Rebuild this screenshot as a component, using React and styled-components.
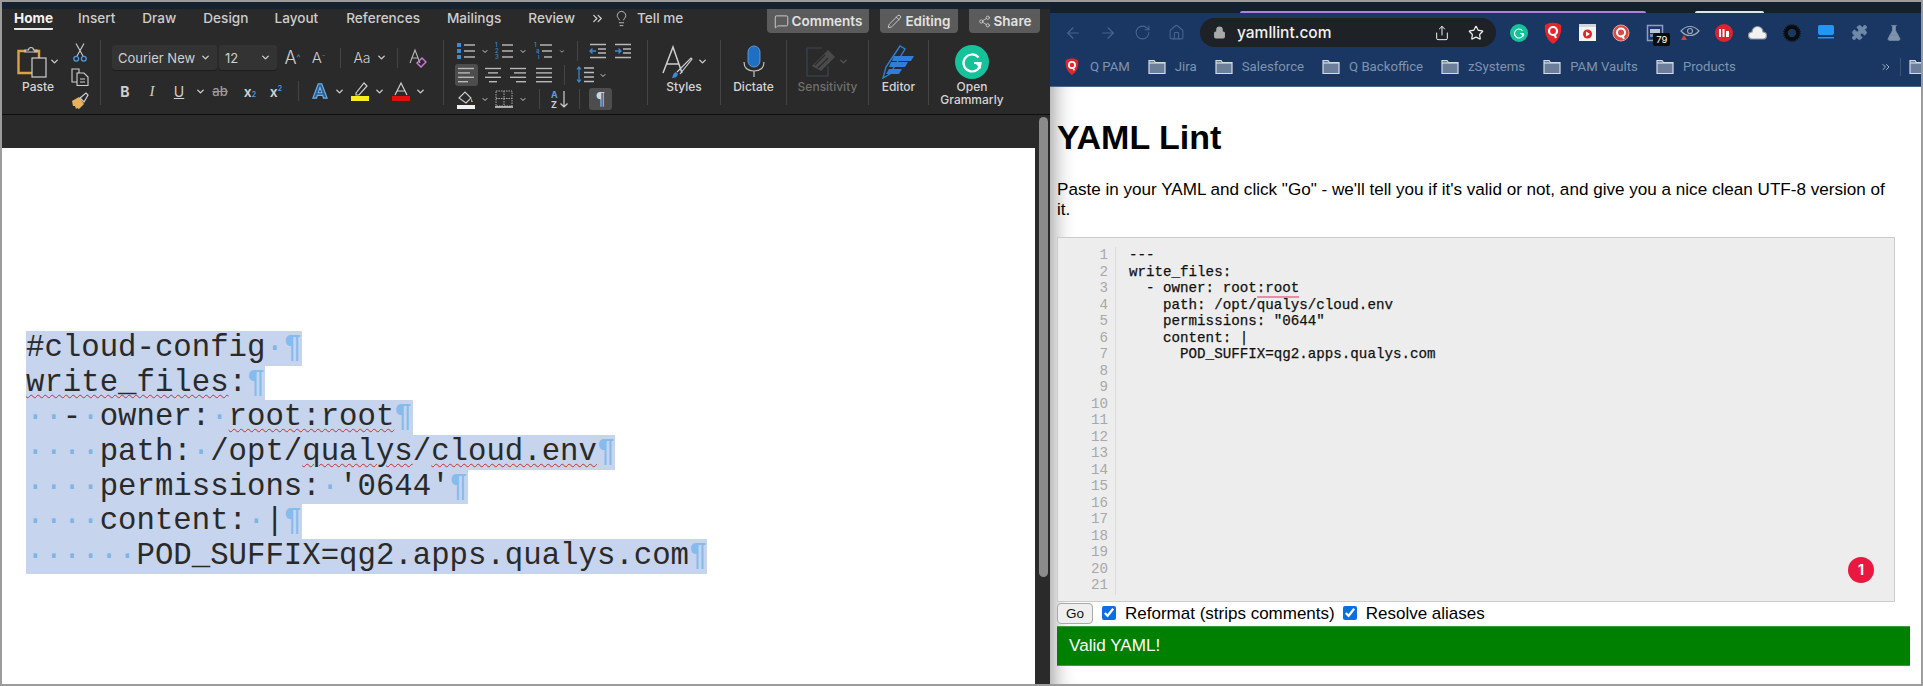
import React from 'react';
import styled, { createGlobalStyle } from 'styled-components';
import {
  ArrowLeft, ArrowRight, RotateCw, Home as HomeIcon, Lock, Share as ShareUp, Star, Puzzle, FlaskConical,
  ChevronDown, ChevronsRight, Lightbulb, MessageSquare, Pencil, Share2, ChevronsRight as More,
} from 'lucide-react';

const GlobalStyle = createGlobalStyle`
  html, body { margin: 0; padding: 0; background: #9c9c9c; overflow: hidden; }
  * { box-sizing: border-box; }
`;

const Frame = styled.div`
  display: flex;
  width: 1923px;
  height: 686px;
  padding: 2px;
  background: #9c9c9c;
  font-family: Inter, "Liberation Sans", sans-serif;
`;

/* ---------- word ---------- */
const Word = styled.div`
  width: 1048px;
  flex: none;
  display: flex;
  flex-direction: column;
  background: #2a2a2a;
`;
const TopStrip = styled.div`
  height: 7px;
  background: ${p => p.$bg};
  flex: none;
`;
const TabRow = styled.div`
  height: 27px;
  display: flex;
  align-items: flex-start;
  padding-left: 12px;
  background: #2a2a2a;
  color: #cfcfcf;
  flex: none;
  position: relative;
`;
const Tab = styled.div`
  font-size: 13.6px;
  line-height: 18px;
  margin-right: ${p => p.$gap}px;
  font-weight: ${p => (p.$active ? 700 : 500)};
  color: ${p => (p.$active ? '#f2f2f2' : '#cdcdcd')};
  padding-bottom: 1px;
  border-bottom: ${p => (p.$active ? '2px solid #e8e8e8' : '2px solid transparent')};
  border-radius: 1px;
`;
const TabTools = styled.div`
  display: flex;
  align-items: center;
  color: #cfcfcf;
  height: 18px;
  gap: 8px;
  margin-right: 7px;
`;
const ShareButtons = styled.div`
  margin-left: auto;
  display: flex;
  gap: 11px;
  margin-right: 10px;
`;
const PillButton = styled.div`
  width: ${p => p.$w}px;
  height: 24px;
  display: flex;
  align-items: center;
  justify-content: center;
  gap: 3px;
  background: #5b5b5b;
  color: #e2e2e2;
  border-radius: 0 0 4px 4px;
  font-size: 13.5px;
  font-weight: 600;
`;
const Ribbon = styled.div`
  height: 79px;
  flex: none;
  display: flex;
  background: #2a2a2a;
  border-bottom: 1px solid #0d0d0d;
`;
const Group = styled.div`
  width: ${p => p.$w}px;
  flex: none;
  display: flex;
  flex-direction: ${p => (p.$col ? 'column' : 'row')};
  padding-left: ${p => p.$pl || 0}px;
  padding-top: ${p => p.$pt || 0}px;
`;
const Sep = styled.div`
  width: 1px;
  margin: 4px 0 9px;
  background: #444;
  flex: none;
`;
const Cell = styled.div`
  width: ${p => p.$w}px;
  height: 24px;
  flex: none;
  display: flex;
  align-items: center;
  justify-content: center;
  color: ${p => p.$c || '#cfcfcf'};
  font-size: ${p => p.$fs || 14}px;
  font-weight: ${p => p.$fw || 500};
  font-style: ${p => (p.$italic ? 'italic' : 'normal')};
`;
const MiniSep = styled.span`
  width: 1px;
  height: 20px;
  background: #454545;
`;
const Row = styled.div`
  display: flex;
  align-items: center;
  height: ${p => p.$h || 24}px;
  margin-top: ${p => p.$mt || 0}px;
  margin-left: ${p => p.$ml || 0}px;
`;
const Picker = styled.div`
  width: ${p => p.$w}px;
  height: 25px;
  margin-right: 2px;
  display: flex;
  align-items: center;
  justify-content: space-between;
  padding: 0 6px;
  background: #333;
  border-radius: 3px;
  box-shadow: 0 1px 0 #1d1d1d;
  color: #d0d0d0;
  font-size: 13px;
`;
const Selected = styled.div`
  width: 23px;
  height: 22px;
  display: flex;
  align-items: center;
  justify-content: center;
  border-radius: 3px;
  background: #4d4d4d;
  font-family: "Liberation Serif", serif;
  font-size: 18px;
  color: #d4d4d4;
`;
const PasteCol = styled.div`
  width: 56px;
  margin-left: 8px;
  display: flex;
  flex-direction: column;
  align-items: center;
`;
const ClipStack = styled.div`
  width: 28px;
  padding-top: 5px;
  display: flex;
  flex-direction: column;
  align-items: center;
`;
const LargeCol = styled.div`
  display: flex;
  flex-direction: column;
  align-items: center;
  width: 100%;
  padding-top: 7px;
`;
const LargeIcon = styled.div`
  height: 37px;
  display: flex;
  align-items: center;
  justify-content: center;
  gap: 2px;
`;
const RibbonLabel = styled.div`
  margin-top: ${p => p.$mt || 0}px;
  font-size: 12px;
  line-height: 13px;
  text-align: center;
  font-weight: 500;
  color: ${p => (p.$dim ? '#6f6f6f' : '#d4d4d4')};
`;
const GrowMark = styled.sup`
  font-size: ${p => p.$fs}px;
  color: #5aa0e0;
`;
const ScriptMark = styled.span`
  font-size: 7px;
  color: #4f9ce0;
  align-self: ${p => p.$align};
  margin-top: ${p => (p.$align === 'flex-start' ? 5 : 0)}px;
  margin-bottom: ${p => (p.$align === 'flex-end' ? 4 : 0)}px;
`;
const SerifItalic = styled.span`
  font-family: "Liberation Serif", serif;
  font-style: italic;
  font-size: 15px;
`;
const DarkBand = styled.div`
  height: 33px;
  flex: none;
  background: #2a2a2a;
`;
const DocArea = styled.div`
  flex: 1;
  display: flex;
  min-height: 0;
`;
const Page = styled.div`
  flex: 1;
  background: #fff;
  padding: 183px 0 0 24px;
`;
const DocLine = styled.div`
  width: fit-content;
  height: 34.7px;
  line-height: 34.7px;
  background: #c6d4ed;
  font-family: "Liberation Mono", monospace;
  font-size: 30.7px;
  color: #2a2a2a;
  white-space: pre;
`;
const Dot = styled.span`
  color: #7fb4e6;
`;
const Pilcrow = styled.span`
  color: #86bbee;
`;
const Squiggle = styled.span`
  text-decoration: underline wavy #c4302b 1px;
  text-underline-offset: 3px;
`;
const ScrollTrack = styled.div`
  width: 15px;
  flex: none;
  padding: 0 2px 109px 4px;
  margin-top: -33px;
  background: #2a2a2a;
`;
const ScrollThumb = styled.div`
  height: 100%;
  margin-top: 2px;
  border-radius: 5px;
  background: #8b8b8b;
`;

/* ---------- browser ---------- */
const Browser = styled.div`
  flex: 1;
  min-width: 0;
  display: flex;
  flex-direction: column;
  background: #fff;
`;
const TabStrip = styled.div`
  height: 11px;
  flex: none;
  display: flex;
  align-items: flex-end;
  background: #14202e;
  padding-left: 190px;
`;
const TabLine = styled.div`
  height: 2px;
  width: ${p => p.$w}px;
  margin-right: ${p => p.$mr || 0}px;
  background: ${p => p.$c};
  border-radius: 2px 2px 0 0;
`;
const Toolbar = styled.div`
  height: 39px;
  flex: none;
  display: flex;
  align-items: center;
  padding-left: 6px;
  background: #1a3763;
  overflow: hidden;
`;
const NavButton = styled.div`
  width: 34.5px;
  flex: none;
  display: flex;
  justify-content: center;
  color: #47658f;
`;
const Omnibox = styled.div`
  width: 296px;
  height: 29px;
  flex: none;
  margin: 0 6px;
  display: flex;
  align-items: center;
  padding: 0 12px 0 13px;
  border-radius: 15px;
  background: #1e2126;
  color: #f1f1f1;
`;
const Url = styled.div`
  margin-left: 11px;
  font-size: 15.5px;
  font-weight: 500;
  flex: 1;
`;
const OmniAction = styled.div`
  display: flex;
  margin-left: ${p => p.$ml || 0}px;
`;
const ExtSlot = styled.div`
  width: 34.1px;
  flex: none;
  display: flex;
  justify-content: center;
  position: relative;
  color: #6f89a8;
`;
const CountBadge = styled.div`
  position: absolute;
  left: 15px;
  top: 9px;
  width: 17px;
  height: 13px;
  background: #0b0b0b;
  color: #fff;
  font-size: 9.5px;
  line-height: 13px;
  text-align: center;
  border-radius: 2px;
`;
const Bookmarks = styled.div`
  height: 35px;
  flex: none;
  display: flex;
  align-items: center;
  padding: 0 0 5px 15px;
  background: #1a3763;
  border-bottom: 1px solid #4a6586;
  color: #7e94b0;
  font-family: Roboto, sans-serif;
  font-size: 13.2px;
  overflow: hidden;
`;
const Bookmark = styled.div`
  display: flex;
  align-items: center;
  gap: ${p => p.$gap || 9}px;
  margin-right: 18px;
  flex: none;
`;
const BookmarkEnd = styled.div`
  margin-left: auto;
  display: flex;
  align-items: center;
  gap: 8px;
  margin-right: -6px;
  color: #9fb1c7;
`;
const BookmarkSep = styled.span`
  width: 1px;
  height: 18px;
  background: #3a5578;
`;
const WebPage = styled.div`
  flex: 1;
  padding: 30px 0 0 7px;
  background: #fff;
  box-shadow: inset 22px 0 22px -20px rgba(0, 0, 0, 0.45);
  font-family: "Liberation Sans", Arial, sans-serif;
  color: #000;
  font-size: 17.1px;
`;
const Title = styled.h1`
  margin: 0;
  font-size: 34px;
  line-height: 40px;
  font-weight: 700;
`;
const Intro = styled.p`
  margin: 23px 0 17px;
  width: 838px;
  line-height: 20px;
`;
const CodeBox = styled.div`
  position: relative;
  width: 838px;
  height: 365px;
  display: flex;
  padding: 9px 0 6px;
  background: #ededed;
  border: 1px solid #cbcbcb;
  font-family: "Liberation Mono", monospace;
  font-size: 14.2px;
  line-height: 16.5px;
`;
const Gutter = styled.div`
  width: 58px;
  flex: none;
  padding-right: 7px;
  text-align: right;
  color: #a8a8a8;
  border-right: 1px solid #dcdcdc;
`;
const Code = styled.pre`
  margin: 0 0 0 13px;
  font: inherit;
  color: #111;
  -webkit-text-stroke: 0.25px #111;
`;
const SpellMark = styled.span`
  border-bottom: 2px solid #ee8ba8;
`;
const ErrorBadge = styled.div`
  position: absolute;
  right: 20px;
  bottom: 18px;
  width: 26px;
  height: 26px;
  border-radius: 50%;
  background: #e8183f;
  color: #fff;
  font-family: Inter, sans-serif;
  font-size: 14px;
  font-weight: 700;
  line-height: 26px;
  text-align: center;
`;
const FormRow = styled.div`
  display: flex;
  align-items: center;
  height: 21px;
  margin-top: 1px;
`;
const GoButton = styled.button`
  width: 36px;
  height: 21px;
  padding: 0;
  margin-right: 9px;
  background: #efefef;
  border: 1px solid #a9a9a9;
  border-radius: 4px;
  font-family: "Liberation Sans", Arial, sans-serif;
  font-size: 13.5px;
  color: #111;
`;
const Check = styled.input`
  width: 14px;
  height: 14px;
  margin: 0 9px 2px 0;
  accent-color: #0b6fe3;
`;
const CheckLabel = styled.label`
  margin-right: 8px;
  font-size: 17px;
`;
const ValidBar = styled.div`
  width: 853px;
  height: 40px;
  margin-top: 2px;
  padding-left: 12px;
  display: flex;
  align-items: center;
  background: #008000;
  border-top: 1px solid #3d9c3d;
  border-bottom: 1px solid #3d9c3d;
  color: #fff;
`;

/* ---------- drawings ---------- */
const Chev = ({ c = '#cfcfcf' }) => <ChevronDown size={11} strokeWidth={3} color={c} />;

const Bars = ({ kind }) => {
  const rows = {
    left: [[2, 18], [2, 14], [2, 18], [2, 12]],
    center: [[2, 18], [5, 15], [2, 18], [6, 14]],
    right: [[2, 18], [6, 18], [2, 18], [8, 18]],
    just: [[2, 18], [2, 18], [2, 18], [2, 18]],
  }[kind];
  return (
    <svg width="20" height="18" viewBox="0 0 20 18" stroke="#b8b8b8" strokeWidth="1.4">
      {rows.map(([a, b], i) => <line key={i} x1={a} x2={b} y1={2.5 + i * 4.4} y2={2.5 + i * 4.4} />)}
    </svg>
  );
};

const ListIcon = ({ marks }) => (
  <svg width="20" height="18" viewBox="0 0 20 18">
    {[3, 9, 15].map((y, i) => (
      <g key={y}>
        {marks === 'bullet' && <rect x="1" y={y - 2} width="4" height="4" fill="#3d8bd4" />}
        {marks === 'number' && <text x="1" y={y + 2} fontSize="6" fontFamily="Inter" fill="#3d8bd4">{i + 1}</text>}
        {marks === 'multi' && <text x={1 + i * 2} y={y + 2} fontSize="6" fontFamily="Inter" fill="#3d8bd4">{['1', 'a', 'i'][i]}</text>}
        <line x1={marks === 'multi' ? 7 + i * 2 : 8} x2="19" y1={y} y2={y} stroke="#bdbdbd" strokeWidth="1.4" />
      </g>
    ))}
  </svg>
);

const IndentIcon = ({ dir }) => (
  <svg width="18" height="16" viewBox="0 0 18 16" fill="none" stroke="#b9b9b9" strokeWidth="1.3">
    <path d="M1 1.5h16M9 6h8M9 10h8M1 14.5h16" />
    <path d={dir === 'out' ? 'M7 8H1M3.5 5.5 1 8l2.5 2.5' : 'M1 8h6M4.5 5.5 7 8l-2.5 2.5'} stroke="#3d8bd4" />
  </svg>
);

const PasteIcon = () => (
  <svg width="32" height="33" viewBox="0 0 32 33" fill="none">
    <path d="M9 6H1.5v22H15" stroke="#e0a040" strokeWidth="2.4" />
    <path d="M17 6h5v7" stroke="#e0a040" strokeWidth="2.4" />
    <path d="M8 7V5h3.5a2.5 2.5 0 0 1 5 0H20v2z" stroke="#c9c9c9" strokeWidth="1.2" />
    <rect x="15" y="13" width="14" height="19" stroke="#d0d0d0" strokeWidth="1.2" />
  </svg>
);

const CutIcon = () => (
  <svg width="14" height="20" viewBox="0 0 14 20" fill="none">
    <path d="M3 0.5 10 13M11 0.5 4 13" stroke="#cfcfcf" strokeWidth="1.1" />
    <circle cx="3.2" cy="15.800" r="2.400" stroke="#4f9ce0" strokeWidth="1.300" />
    <circle cx="10.800" cy="15.800" r="2.400" stroke="#4f9ce0" strokeWidth="1.300" />
  </svg>
);

const CopyIcon = () => (
  <svg width="18" height="18" viewBox="0 0 18 18" fill="none" stroke="#cfcfcf" strokeWidth="1.1">
    <path d="M6 14H1V1h7l0 4" />
    <path d="M6 5h7l4 4v8.500H6zM9 11h5M9 14h5" />
  </svg>
);

const BrushIcon = () => (
  <svg width="18" height="18" viewBox="0 0 18 18">
    <path d="M1 9 8 5l5 7-5 5-2-1-1 1-1-3-2 0z" fill="#e8b25c" />
    <path d="M9 6l6-5 2 2-4 7z" fill="none" stroke="#d0d0d0" strokeWidth="1.2" />
  </svg>
);

const ColorA = ({ bar }) => (
  <svg width="18" height="20" viewBox="0 0 18 20" fill="none">
    <path d="M3 14 9 2l6 12M5 10h8" stroke="#cfcfcf" strokeWidth="1.2" />
    <rect x="0" y="15" width="18" height="5" fill={bar} />
  </svg>
);

const HighlightIcon = () => (
  <svg width="18" height="20" viewBox="0 0 18 20" fill="none">
    <path d="M5 12 13 2l3 3-8 9-3 0z" stroke="#cfcfcf" strokeWidth="1.2" />
    <rect x="0" y="15" width="18" height="5" fill="#f5ee1d" />
  </svg>
);

const EffectA = () => (
  <svg width="18" height="20" viewBox="0 0 18 20">
    <path d="M1 18 7 2h4l6 16h-4l-1-3H6l-1 3zM7 12h4L9 6z" fill="#2a5f92" stroke="#6fb3ea" strokeWidth="1.3" />
  </svg>
);

const ClearFormat = () => (
  <svg width="18" height="20" viewBox="0 0 18 20" fill="none">
    <path d="M1 15 6 2l5 13M3 10h6" stroke="#b8b8b8" strokeWidth="1.1" />
    <path d="M8 15l5-5 4 4-5 5z" stroke="#c77ad0" strokeWidth="1.5" />
  </svg>
);

const FillIcon = () => (
  <svg width="18" height="20" viewBox="0 0 18 20" fill="none">
    <path d="M2 9 8 3l6 6-5 5z" stroke="#cfcfcf" strokeWidth="1.1" />
    <path d="M14 9l2 4-2 0z" fill="#e0a040" />
    <rect y="16" width="18" height="4" fill="#f0f0f0" />
  </svg>
);

const BorderIcon = () => (
  <svg width="18" height="18" viewBox="0 0 18 18" fill="none" stroke="#a8a8a8" strokeWidth="1" strokeDasharray="1.500 1">
    <rect x="1" y="1" width="16" height="15" />
    <path d="M9 1v15M1 8.500h16" />
    <path d="M0 17h18" stroke="#e0e0e0" strokeDasharray="none" strokeWidth="1.4" />
  </svg>
);

const SpacingIcon = () => (
  <svg width="18" height="18" viewBox="0 0 18 18" fill="none">
    <path d="M3 1v15M1 3.500 3 1l2 2.500M1 13.500 3 16l2-2.500" stroke="#3d8bd4" strokeWidth="1.2" />
    <path d="M8 2h10M8 6.500h10M8 11h10M8 15.500h10" stroke="#bdbdbd" strokeWidth="1.3" />
  </svg>
);

const SortIcon = () => (
  <svg width="18" height="20" viewBox="0 0 18 20" fill="none">
    <text x="0" y="9" fontSize="9" fontWeight="700" fontFamily="Inter" fill="#5aa0e0">A</text>
    <text x="0" y="19" fontSize="9" fontWeight="700" fontFamily="Inter" fill="#cfcfcf">Z</text>
    <path d="M13 2v16M9.500 14.500 13 18l3.500-3.500" stroke="#cfcfcf" strokeWidth="1.2" />
  </svg>
);

const StylesIcon = () => (
  <svg width="34" height="34" viewBox="0 0 34 34" fill="none">
    <path d="M2 28 12 2l9 26M6 19h12" stroke="#cfcfcf" strokeWidth="1.5" />
    <path d="M16 27 30 13l1 1-12 15" stroke="#cfcfcf" strokeWidth="1.2" />
    <path d="M11 33c3 0 5-1 6-4l-2-2c-3 1-3 4-4 6z" fill="#3d8bd4" />
  </svg>
);

const MicIcon = () => (
  <svg width="22" height="33" viewBox="0 0 22 33" fill="none">
    <rect x="5" y="1" width="12" height="21" rx="6" fill="#1f6fc4" stroke="#6aa7e0" strokeWidth=".8" />
    <path d="M1 17c0 6 4 9 10 9s10-3 10-9M11 26v6" stroke="#c4c4c4" strokeWidth="1.2" />
  </svg>
);

const SensitivityIcon = () => (
  <svg width="30" height="31" viewBox="0 0 30 31" fill="none">
    <path d="M1 2h15M1 2v28h21V20" stroke="#3a4652" strokeWidth="1.2" />
    <path d="M6 20 22 4l7 7-14 14z" fill="#4a4a4a" />
    <path d="M9 19l10-10M12 22l10-10" stroke="#2a2a2a" strokeWidth="1.2" />
  </svg>
);

const EditorIcon = () => (
  <svg width="33" height="34" viewBox="0 0 33 34">
    <path d="M1 33 4 22 18 1l5 3L8 29z" fill="none" stroke="#2f7fd8" strokeWidth="1.4" />
    <path d="M12 11h20l-3 5H10zM9 17h17l-3 5H7zM7 24h13l-3 5H4z" fill="#2f7fd8" />
  </svg>
);

const GrammarlyMark = ({ size }) => (
  <svg width={size} height={size} viewBox="0 0 34 34">
    <circle cx="17" cy="17" r="17" fill="#15c39a" />
    <path d="M23.500 12.500A8.500 8.500 0 1 0 25.500 18H19" fill="none" stroke="#fff" strokeWidth="2.2" />
    <path d="M26 24v-6h-6z" fill="#fff" />
  </svg>
);

const QShield = ({ size = 22 }) => (
  <svg width={size * 0.82} height={size} viewBox="0 0 18 22">
    <path d="M1 3c5-3 11-3 16 0 1 8-2 15-8 19C3 18 0 11 1 3z" fill="#e2272c" />
    <circle cx="9" cy="9" r="4" fill="none" stroke="#fff" strokeWidth="2.200" />
    <path d="M10 12l2 4" stroke="#fff" strokeWidth="2" />
  </svg>
);

const FolderIcon = () => (
  <svg width="18" height="15" viewBox="0 0 18 15">
    <path d="M1 1.500h5l1.500 2H17v11H1z" fill="#6b7f9b" stroke="#d4dbe4" strokeWidth="1.200" />
    <path d="M1 4h16" stroke="#d4dbe4" strokeWidth="1.200" />
  </svg>
);

const PlayTile = () => (
  <svg width="17" height="17" viewBox="0 0 17 17">
    <rect width="17" height="17" fill="#f4f4f4" />
    <rect width="17" height="3" fill="#cfd6df" />
    <circle cx="8.500" cy="10" r="4.500" fill="#d92b2b" />
    <path d="M7 7.500v5l4-2.500z" fill="#fff" />
  </svg>
);

const QRing = () => (
  <svg width="18" height="18" viewBox="0 0 18 18" fill="none">
    <circle cx="9" cy="9" r="8" fill="#d94a45" stroke="#e8a09c" />
    <circle cx="9" cy="8.500" r="4" stroke="#fff" strokeWidth="2" />
    <path d="M10 11l2 4" stroke="#fff" strokeWidth="2" />
  </svg>
);

const FrameExt = () => (
  <svg width="18" height="18" viewBox="0 0 18 18" fill="none">
    <rect x="1.500" y="1.500" width="15" height="15" stroke="#8ea0b6" strokeWidth="1.500" />
    <rect x="4" y="5" width="10" height="4" fill="#b7c6d8" />
    <rect x="4" y="10" width="10" height="3" fill="#6f89a8" />
  </svg>
);

const EyeExt = () => (
  <svg width="20" height="16" viewBox="0 0 20 16" fill="none">
    <path d="M1 6c5-6 13-6 18 0-5 6-13 6-18 0z" stroke="#9aa6b5" strokeWidth="1.200" />
    <circle cx="10" cy="6" r="2.500" stroke="#9aa6b5" strokeWidth="1.200" />
    <path d="M1 15l3-5 3 5z" fill="#d0433e" />
  </svg>
);

const BarsExt = () => (
  <svg width="18" height="18" viewBox="0 0 18 18">
    <circle cx="9" cy="9" r="9" fill="#d9262e" />
    <path d="M4 5h2v8H4zM7.500 5h2v8h-2zM11 7h3v6h-3z" fill="#fff" />
  </svg>
);

const CloudExt = () => (
  <svg width="19" height="16" viewBox="0 0 19 16">
    <path d="M4 14a3.500 3.500 0 0 1 0-7 5.500 5.500 0 0 1 11 0 3.500 3.500 0 0 1 0 7z" fill="#f2f2f2" stroke="#8a94a0" strokeWidth="1.200" />
  </svg>
);

const SunExt = () => (
  <svg width="18" height="18" viewBox="0 0 18 18" fill="none">
    <circle cx="9" cy="9" r="6" stroke="#0b0b0b" strokeWidth="3.500" />
    <circle cx="9" cy="9" r="8" stroke="#0b0b0b" strokeWidth="1.600" strokeDasharray="1 1" />
  </svg>
);

const BlueExt = () => (
  <svg width="18" height="15" viewBox="0 0 18 15">
    <rect x="1" y="0" width="16" height="10" rx="2" fill="#2196f3" />
    <rect x="1" y="12" width="16" height="1.500" fill="#2196f3" />
  </svg>
);

const tabs = [
  ['Insert', 27], ['Draw', 27], ['Design', 26], ['Layout', 28], ['References', 27], ['Mailings', 27], ['Review', 15],
];

const bookmarks = [
  'Jira', 'Salesforce', 'Q Backoffice', 'zSystems', 'PAM Vaults', 'Products',
];

export default function App() {
  return (
    <>
      <GlobalStyle />
      <Frame>
        <Word>
          <TopStrip $bg="#16222e" />
          <TabRow>
            <Tab $active $gap={25}>Home</Tab>
            {tabs.map(([name, gap]) => <Tab key={name} $gap={gap}>{name}</Tab>)}
            <TabTools>
              <ChevronsRight size={15} strokeWidth={2} />
              <Lightbulb size={17} strokeWidth={1.2} />
            </TabTools>
            <Tab $gap={0}>Tell me</Tab>
            <ShareButtons>
              <PillButton $w={102}><MessageSquare size={15} strokeWidth={1.3} /> Comments</PillButton>
              <PillButton $w={78}><Pencil size={15} strokeWidth={1.3} /> Editing</PillButton>
              <PillButton $w={71}><Share2 size={13} strokeWidth={1.3} /> Share</PillButton>
            </ShareButtons>
          </TabRow>

          <Ribbon>
            <Group $w={98}>
              <PasteCol>
                <Row $h={33} $mt={9}><PasteIcon /><Chev /></Row>
                <RibbonLabel $mt={2}>Paste</RibbonLabel>
              </PasteCol>
              <ClipStack>
                <Cell $w={28}><CutIcon /></Cell>
                <Cell $w={28}><CopyIcon /></Cell>
                <Cell $w={28}><BrushIcon /></Cell>
              </ClipStack>
            </Group>
            <Sep />
            <Group $w={342} $col $pl={11} $pt={9}>
              <Row $h={25}>
                <Picker $w={105}>Courier New <Chev /></Picker>
                <Picker $w={58}>12 <Chev /></Picker>
                <Cell $w={27} $fs={18} $fw={300}>A<GrowMark $fs={9}>^</GrowMark></Cell>
                <Cell $w={25} $fs={15} $fw={300}>A<GrowMark $fs={8}>ˇ</GrowMark></Cell>
                <Cell $w={18}><MiniSep /></Cell>
                <Cell $w={26} $fs={14} $fw={300}>Aa</Cell>
                <Cell $w={12}><Chev /></Cell>
                <Cell $w={20}><MiniSep /></Cell>
                <Cell $w={22}><ClearFormat /></Cell>
              </Row>
              <Row $mt={9}>
                <Cell $w={26} $fw={700}>B</Cell>
                <Cell $w={28}><SerifItalic>I</SerifItalic></Cell>
                <Cell $w={26} $fw={400}><u>U</u></Cell>
                <Cell $w={16}><Chev /></Cell>
                <Cell $w={24} $fs={13} $c="#9a9a9a"><s>ab</s></Cell>
                <Cell $w={36} $fw={600}>x<ScriptMark $align="flex-end">2</ScriptMark></Cell>
                <Cell $w={16} $fw={600}>x<ScriptMark $align="flex-start">2</ScriptMark></Cell>
                <Cell $w={28}><MiniSep /></Cell>
                <Cell $w={16}><EffectA /></Cell>
                <Cell $w={22}><Chev /></Cell>
                <Cell $w={20}><HighlightIcon /></Cell>
                <Cell $w={18}><Chev /></Cell>
                <Cell $w={26}><ColorA bar="#e01010" /></Cell>
                <Cell $w={12}><Chev /></Cell>
              </Row>
            </Group>
            <Sep />
            <Group $w={203} $col $pl={7} $pt={3}>
              <Row>
                <Cell $w={30}><ListIcon marks="bullet" /></Cell>
                <Cell $w={8}><Chev /></Cell>
                <Cell $w={30}><ListIcon marks="number" /></Cell>
                <Cell $w={8}><Chev /></Cell>
                <Cell $w={32}><ListIcon marks="multi" /></Cell>
                <Cell $w={6}><Chev /></Cell>
                <Cell $w={24}><MiniSep /></Cell>
                <Cell $w={18}><IndentIcon dir="out" /></Cell>
                <Cell $w={32}><IndentIcon dir="in" /></Cell>
              </Row>
              <Row>
                <Cell $w={30}><Selected><Bars kind="left" /></Selected></Cell>
                <Cell $w={24}><Bars kind="center" /></Cell>
                <Cell $w={26}><Bars kind="right" /></Cell>
                <Cell $w={26}><Bars kind="just" /></Cell>
                <Cell $w={14}><MiniSep /></Cell>
                <Cell $w={28}><SpacingIcon /></Cell>
                <Cell $w={8}><Chev /></Cell>
              </Row>
              <Row>
                <Cell $w={30}><FillIcon /></Cell>
                <Cell $w={8}><Chev /></Cell>
                <Cell $w={30}><BorderIcon /></Cell>
                <Cell $w={8}><Chev /></Cell>
                <Cell $w={24}><MiniSep /></Cell>
                <Cell $w={18}><SortIcon /></Cell>
                <Cell $w={20}><MiniSep /></Cell>
                <Selected>¶</Selected>
              </Row>
            </Group>
            <Sep />
            <Group $w={72}>
              <LargeCol>
                <LargeIcon><StylesIcon /><Chev /></LargeIcon>
                <RibbonLabel>Styles</RibbonLabel>
              </LargeCol>
            </Group>
            <Sep />
            <Group $w={65}>
              <LargeCol>
                <LargeIcon><MicIcon /></LargeIcon>
                <RibbonLabel>Dictate</RibbonLabel>
              </LargeCol>
            </Group>
            <Sep />
            <Group $w={81}>
              <LargeCol>
                <LargeIcon><SensitivityIcon /><Chev c="#555" /></LargeIcon>
                <RibbonLabel $dim>Sensitivity</RibbonLabel>
              </LargeCol>
            </Group>
            <Sep />
            <Group $w={59}>
              <LargeCol>
                <LargeIcon><EditorIcon /></LargeIcon>
                <RibbonLabel>Editor</RibbonLabel>
              </LargeCol>
            </Group>
            <Sep />
            <Group $w={86}>
              <LargeCol>
                <LargeIcon><GrammarlyMark size={34} /></LargeIcon>
                <RibbonLabel>Open<br />Grammarly</RibbonLabel>
              </LargeCol>
            </Group>
          </Ribbon>

          <DarkBand />
          <DocArea>
            <Page>
              <DocLine>#cloud-config<Dot>·</Dot><Pilcrow>¶</Pilcrow></DocLine>
              <DocLine><Squiggle>write_files</Squiggle>:<Pilcrow>¶</Pilcrow></DocLine>
              <DocLine><Dot>··</Dot>-<Dot>·</Dot>owner:<Dot>·</Dot><Squiggle>root:root</Squiggle><Pilcrow>¶</Pilcrow></DocLine>
              <DocLine><Dot>····</Dot>path:<Dot>·</Dot>/opt/<Squiggle>qualys</Squiggle>/<Squiggle>cloud.env</Squiggle><Pilcrow>¶</Pilcrow></DocLine>
              <DocLine><Dot>····</Dot>permissions:<Dot>·</Dot>'0644'<Pilcrow>¶</Pilcrow></DocLine>
              <DocLine><Dot>····</Dot>content:<Dot>·</Dot>|<Pilcrow>¶</Pilcrow></DocLine>
              <DocLine><Dot>······</Dot>POD_SUFFIX=qg2.apps.qualys.com<Pilcrow>¶</Pilcrow></DocLine>
            </Page>
            <ScrollTrack><ScrollThumb /></ScrollTrack>
          </DocArea>
        </Word>

        <Browser>
          <TabStrip>
            <TabLine $w={406} $mr={49} $c="#b07ee6" />
            <TabLine $w={69} $c="#dfe5ee" />
          </TabStrip>
          <Toolbar>
            <NavButton><ArrowLeft size={18} strokeWidth={1.5} /></NavButton>
            <NavButton><ArrowRight size={18} strokeWidth={1.5} /></NavButton>
            <NavButton><RotateCw size={17} strokeWidth={1.5} /></NavButton>
            <NavButton><HomeIcon size={17} strokeWidth={1.5} /></NavButton>
            <Omnibox>
              <Lock size={13} fill="#a9a9a9" color="#a9a9a9" />
              <Url>yamllint.com</Url>
              <OmniAction><ShareUp size={16} strokeWidth={1.5} /></OmniAction>
              <OmniAction $ml={18}><Star size={16} strokeWidth={1.8} /></OmniAction>
            </Omnibox>
            <ExtSlot><GrammarlyMark size={18} /></ExtSlot>
            <ExtSlot><QShield /></ExtSlot>
            <ExtSlot><PlayTile /></ExtSlot>
            <ExtSlot><QRing /></ExtSlot>
            <ExtSlot><FrameExt /><CountBadge>79</CountBadge></ExtSlot>
            <ExtSlot><EyeExt /></ExtSlot>
            <ExtSlot><BarsExt /></ExtSlot>
            <ExtSlot><CloudExt /></ExtSlot>
            <ExtSlot><SunExt /></ExtSlot>
            <ExtSlot><BlueExt /></ExtSlot>
            <ExtSlot><Puzzle size={17} fill="#6f89a8" strokeWidth={1} /></ExtSlot>
            <ExtSlot><FlaskConical size={18} fill="#7f93ab" strokeWidth={1} /></ExtSlot>
          </Toolbar>
          <Bookmarks>
            <Bookmark $gap={11}><QShield size={17} /> Q PAM</Bookmark>
            {bookmarks.map(name => <Bookmark key={name}><FolderIcon /> {name}</Bookmark>)}
            <BookmarkEnd>
              <More size={12} />
              <BookmarkSep />
              <FolderIcon />
            </BookmarkEnd>
          </Bookmarks>

          <WebPage>
            <Title>YAML Lint</Title>
            <Intro>Paste in your YAML and click "Go" - we'll tell you if it's valid or not, and give you a nice clean UTF-8 version of it.</Intro>
            <CodeBox>
              <Gutter>
                {Array.from({ length: 21 }, (_, i) => <div key={i}>{i + 1}</div>)}
              </Gutter>
              <Code>{'---\nwrite_files:\n  - owner: root'}<SpellMark>:root</SpellMark>{'\n    path: /opt/qualys/cloud.env\n    permissions: "0644"\n    content: |\n      POD_SUFFIX=qg2.apps.qualys.com'}</Code>
              <ErrorBadge>1</ErrorBadge>
            </CodeBox>
            <FormRow>
              <GoButton>Go</GoButton>
              <Check type="checkbox" defaultChecked />
              <CheckLabel>Reformat (strips comments)</CheckLabel>
              <Check type="checkbox" defaultChecked />
              <CheckLabel>Resolve aliases</CheckLabel>
            </FormRow>
            <ValidBar>Valid YAML!</ValidBar>
          </WebPage>
        </Browser>
      </Frame>
    </>
  );
}
